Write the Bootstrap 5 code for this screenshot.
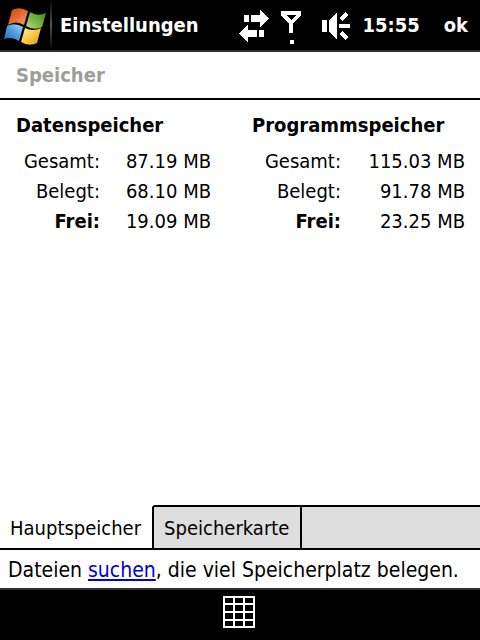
<!DOCTYPE html>
<html lang="de">
<head>
<meta charset="utf-8">
<meta name="viewport" content="width=device-width, initial-scale=1">
<title>Einstellungen – Speicher</title>
<link href="https://cdn.jsdelivr.net/npm/bootstrap@5.3.0/dist/css/bootstrap.min.css" rel="stylesheet">
<style>
  body { font-family: "DejaVu Sans Condensed", "Noto Sans", sans-serif; font-size: 20px; line-height: 30px; color: #000; background: #fff; }
  .topbar { height: 52px; border-bottom: 2px solid #303030; }
  .start { width: 52px; height: 50px; border-right: 2px solid; border-image: linear-gradient(#000, #555, #000) 1; }
  .page-title { height: 48px; border-bottom: 2px solid #000; color: #9c9e98; }
  .strong-text { font-size: 20px; line-height: 30px; font-weight: 700; }
  .ok { padding: 0 12px 0 20px; }
  .pane { padding-top: 10px; }
  .pool-left { padding-left: 16px; padding-right: 29px; }
  .pool-right { padding-left: 12px; padding-right: 15px; }
  .figures { margin-top: 6px; }
  .figures th, .figures td { padding: 0; }
  .figures th { width: 84px; }
  .pool-right .figures th { width: 89px; }
  .tabs { height: 45px; border-bottom: 2px solid #000; }
  .tab { background: #dedede; border: 0 solid #000; border-width: 2px 2px 0 0; padding: 0 11px 0 10px; color: #000; }
  .tab.current { background: #fff; border-top-color: #fff; }
  .tab-rest { background: #dedede; border-top: 2px solid #000; }
  .hint { height: 38px; padding: 5px 8px 3px; font-size: 21px; }
  .hint a { color: #0000d8; }
  .softbar { height: 52px; border-top: 2px solid #303030; padding: 6px 2px 0 0; }
</style>
<script src="https://cdn.jsdelivr.net/npm/bootstrap@5.3.0/dist/js/bootstrap.bundle.min.js"></script>
</head>
<body class="d-flex flex-column min-vh-100">
<header class="topbar bg-black text-white d-flex align-items-center">
  <button type="button" class="start bg-black p-0 border-start-0 border-top-0 border-bottom-0" aria-label="Start">
    <svg class="d-block" width="48" height="48" viewBox="0 0 48 48">
      <defs>
        <linearGradient id="r" x1="0" y1="0" x2="1" y2="1"><stop stop-color="#c8401c"/><stop offset=".5" stop-color="#e86a30"/><stop offset="1" stop-color="#f2a070"/></linearGradient>
        <linearGradient id="g" x1="0" y1="1" x2="1" y2="0"><stop stop-color="#b4dc80"/><stop offset=".5" stop-color="#74b444"/><stop offset="1" stop-color="#3c8424"/></linearGradient>
        <linearGradient id="b" x1="0" y1="1" x2="1" y2="0"><stop stop-color="#2468b4"/><stop offset=".5" stop-color="#4c9cdc"/><stop offset="1" stop-color="#a8d8f8"/></linearGradient>
        <linearGradient id="y" x1="0" y1="0" x2="1" y2="1"><stop stop-color="#fff090"/><stop offset=".5" stop-color="#fcc840"/><stop offset="1" stop-color="#e89018"/></linearGradient>
      </defs>
      <path fill="url(#r)" d="M12 9Q20 5 28 10L24 24Q16 19 8 24Z"/>
      <path fill="url(#g)" d="M30 11Q38 16 46 12L42 26Q34 30 26 25Z"/>
      <path fill="url(#b)" d="M7 25Q15 21 23 26L19 40Q12 35 4 38Z"/>
      <path fill="url(#y)" d="M25 27Q33 31 41 27L37 42Q29 46 21 41Z"/>
    </svg>
  </button>
  <h1 class="strong-text mb-0 ps-2">Einstellungen</h1>
  <div class="d-flex align-items-center ms-auto">
    <svg width="122" height="40" viewBox="236 5 122 40" fill="#fff" shape-rendering="crispEdges" role="img" aria-label="Verbindung, Telefon, Lautsprecher">
      <path d="M244 15h5v7h-5zM251 15h9v-5l9 8.500-9 8.500v-5h-9zM259 30h5v7h-5zM257 30h-9v-5l-9 8.500 9 8.500v-5h9z"/>
      <path fill-rule="evenodd" d="M281 11h20v4l-8 9v9h-4v-9l-8-9zM286 15l5 5 5-5zM290 40h4v4h-4z"/>
      <path d="M322 20h5v12h-5zM329 20l8-7v26l-8-7zM339 24h11v4h-11zM339 18l7-6 2 3-6 6zM339 34l3-3 6 6-2 3z"/>
    </svg>
    <time class="strong-text ps-1">15:55</time>
    <button type="button" class="ok strong-text bg-black text-white border-0 ms-1">ok</button>
  </div>
</header>
<div class="page-title d-flex align-items-center px-3"><h2 class="strong-text mb-0">Speicher</h2></div>
<main class="pane flex-grow-1">
  <div class="row g-0">
    <section class="col-6 pool-left">
      <h3 class="strong-text mb-0" id="daten">Datenspeicher</h3>
      <table class="figures w-100 text-end" aria-labelledby="daten">
        <tr><th class="fw-normal" scope="row">Gesamt:</th><td>87.19 MB</td></tr>
        <tr><th class="fw-normal" scope="row">Belegt:</th><td>68.10 MB</td></tr>
        <tr><th class="fw-bold" scope="row">Frei:</th><td>19.09 MB</td></tr>
      </table>
    </section>
    <section class="col-6 pool-right">
      <h3 class="strong-text mb-0" id="programm">Programmspeicher</h3>
      <table class="figures w-100 text-end" aria-labelledby="programm">
        <tr><th class="fw-normal" scope="row">Gesamt:</th><td>115.03 MB</td></tr>
        <tr><th class="fw-normal" scope="row">Belegt:</th><td>91.78 MB</td></tr>
        <tr><th class="fw-bold" scope="row">Frei:</th><td>23.25 MB</td></tr>
      </table>
    </section>
  </div>
</main>
<div class="tabs d-flex" role="tablist">
  <button type="button" role="tab" aria-selected="true" class="tab current">Hauptspeicher</button>
  <button type="button" role="tab" aria-selected="false" class="tab">Speicherkarte</button>
  <div class="tab-rest flex-grow-1"></div>
</div>
<p class="hint mb-0 text-nowrap">Dateien <a href="#suchen">suchen</a>, die viel Speicherplatz belegen.</p>
<footer class="softbar bg-black d-flex justify-content-center align-items-start">
  <button type="button" class="bg-black border-0 p-0" aria-label="Tastatur">
    <svg class="d-block" width="32" height="32" viewBox="0 0 32 32" fill="none" stroke="#fff" stroke-width="2" shape-rendering="crispEdges"><path d="M1 1h30v30H1zM11 1v30M21 1v30M1 8h30M1 16h30M1 24h30"/></svg>
  </button>
</footer>
</body>
</html>
